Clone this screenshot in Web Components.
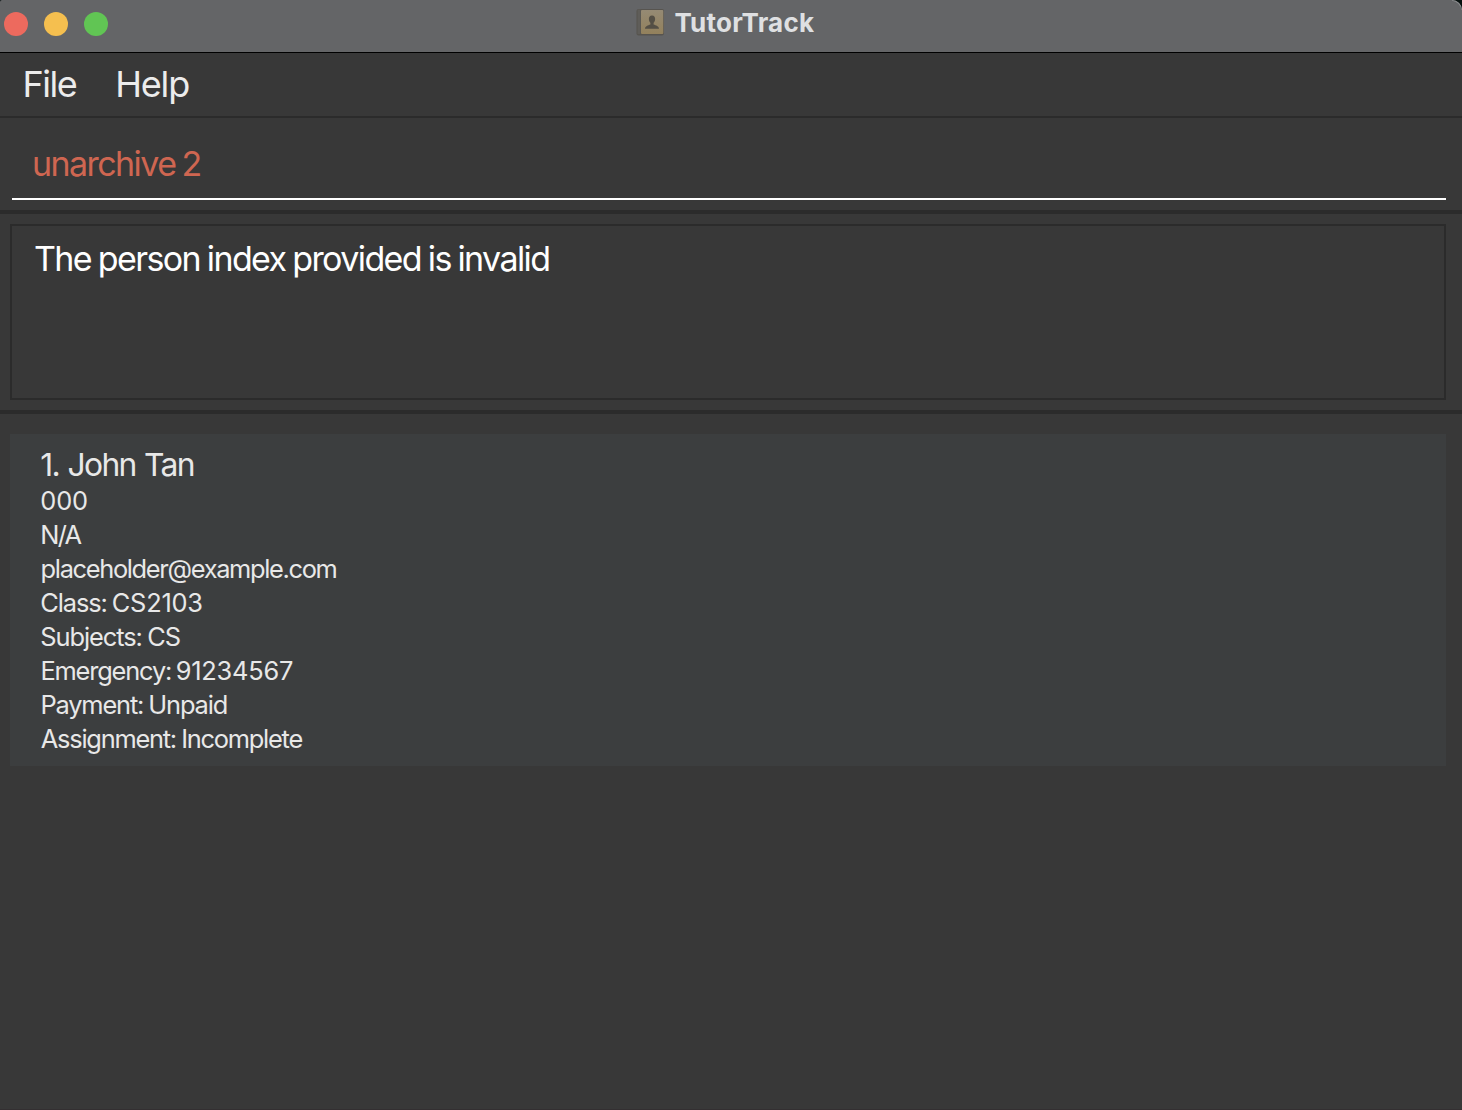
<!DOCTYPE html>
<html lang="en"><head><meta charset="utf-8"><title>TutorTrack</title>
<style>html,body{margin:0;height:100%;background:#383838;overflow:hidden}body{font-family:Inter,"Liberation Sans",sans-serif;color:#ececec}</style></head>
<body>
<app-window>
  <title-bar slot="title"><fit-text start="674.4" ink="139.6">TutorTrack</fit-text></title-bar>
  <menu-bar slot="menu"><fit-text start="25.4" ink="51.4">File</fit-text><fit-text start="118.2" ink="71">Help</fit-text></menu-bar>
  <command-box slot="command"><fit-text start="34" ink="166.4" gap="-2">unarchive 2</fit-text></command-box>
  <result-display slot="result"><fit-text start="35" ink="514.2" gap="-1.3">The person index provided is invalid</fit-text></result-display>
  <person-card>
    <fit-text slot="name" start="41.3" ink="152.5" gap="1.2">1. John Tan</fit-text>
    <fit-text start="41.3" ink="45.8">000</fit-text>
    <fit-text start="42.3" ink="39.2">N/A</fit-text>
    <fit-text start="41.6" ink="295">placeholder@example.com</fit-text>
    <fit-text start="41.3" ink="161" gap="-0.9" tail="0.9">Class: CS2103</fit-text>
    <fit-text start="41.2" ink="138.5" gap="-0.8">Subjects: CS</fit-text>
    <fit-text start="42.4" ink="250.6" gap="-1.6" tail="0.95">Emergency: 91234567</fit-text>
    <fit-text start="42.4" ink="184.3" gap="-0.8">Payment: Unpaid</fit-text>
    <fit-text start="40.8" ink="261.6" gap="-0.6">Assignment: Incomplete</fit-text>
  </person-card>
</app-window>
<script>
const define=(name,html,extra)=>customElements.define(name,class extends HTMLElement{
  constructor(){super();this.attachShadow({mode:'open'}).innerHTML=html}
  connectedCallback(){if(extra)extra(this)}
});
define('app-window',`<style>:host{display:flex;flex-direction:column;height:1110px;width:1462px;box-sizing:border-box;background:#383838;border-bottom:1px solid #332f31}
main{flex:1;border-top:4px solid #2b2b2b;padding:20px 16px 0 10px}</style>
<slot name="title"></slot><slot name="menu"></slot><slot name="command"></slot><slot name="result"></slot><main><slot></slot></main>`);
define('title-bar',`<style>:host{display:block;background:#07100e;border-bottom:1px solid #000;height:52px;font-size:26px;font-weight:700;line-height:45px;color:#dfe0e2}
.bar{display:flex;height:52px;background:#646567;border-radius:2px 10px 0 0}
.bar::after{content:"";box-sizing:border-box;width:10px;height:10px;margin-left:auto;border-radius:0 10px 0 0;box-shadow:inset -1px 1px 0 -0.4px #8a8b8d}
.dots{display:flex;gap:16px;padding:12px 0 0 4px;width:632px}
i{width:24px;height:24px;border-radius:50%;background:#ed6a5e}i:nth-child(2){background:#f5bf4f}i:nth-child(3){background:#61c554}
svg{display:block;margin-top:8px;flex:none}</style>
<div class="bar"><div class="dots"><i></i><i></i><i></i></div>
<svg width="30" height="30" viewBox="0 0 30 30"><defs><linearGradient id="g" x2="0" y2="1"><stop stop-color="#958a74"/><stop offset="1" stop-color="#93815c"/></linearGradient></defs><rect x=".5" y="1" width="27.5" height="26.5" rx="2" fill="#57544f"/><rect x="1.5" y="1.5" width="3" height="24.5" fill="#5f5d59"/><rect x="5" y="2" width="22.3" height="24" rx="1" fill="url(#g)"/><path d="M16 7.5c-2.3 0-3.4 1.7-3.1 4 .2 1.7.8 2.6 1.5 3.3v1.7c-2.4 1-5.2 1.5-5.4 4.3h14c-.2-2.8-3-3.3-5.4-4.3v-1.7c.7-.7 1.3-1.6 1.5-3.3.3-2.3-.8-4-3.1-4z" fill="#544f45"/></svg><slot></slot></div>`);
define('menu-bar',`<style>:host{display:flex;height:63px;border-bottom:2px solid #2b2b2b;font-size:36px;line-height:63px;color:#ececec}</style><slot></slot>`);
define('command-box',`<style>:host{display:block;height:92px;border-bottom:4px solid #2b2b2b;font-size:34px;line-height:69px;color:#cf6651}
div{box-sizing:border-box;height:82px;margin:0 16px 0 12px;padding-top:11px;border-bottom:2px solid #fff}</style><div><slot></slot></div>`);
define('result-display',`<style>:host{display:block;padding:10px 16px 10px 10px;font-size:34px;line-height:40px;color:#fff}
div{box-sizing:border-box;height:176px;padding-top:13px;border:2px solid #2b2b2b}</style><div><slot></slot></div>`);
define('person-card',`<style>:host{display:block;background:#3c3e3f;box-sizing:border-box;height:332px;padding-top:12px;font-size:25.4px;line-height:34px;color:#e8e8e8}
header{font-size:31.8px;line-height:38px}</style><header><slot name="name"></slot></header><slot></slot>`);
// Single line whose visible glyphs begin at `start` and span `ink` pixels;
// `gap` adjusts the spaces and `tail` the tracking of the last word.
define('fit-text',`<style>:host{display:block;white-space:pre;width:max-content;flex:none}</style><slot></slot>`,el=>{
  const num=k=>+el.getAttribute(k)||0;
  const s=getComputedStyle(el),c=document.createElement('canvas').getContext('2d');
  c.font=s.fontWeight+' '+s.fontSize+' Inter';
  const t=el.textContent,m=c.measureText(t),last=t.split(' ').pop(),tail=num('tail');
  const w=m.actualBoundingBoxRight+m.actualBoundingBoxLeft+num('gap')*(t.split(' ').length-1)+tail*(last.length-1);
  const ls=(num('ink')-w)/(t.length-1);
  el.style.letterSpacing=ls+'px';
  el.style.wordSpacing=num('gap')+'px';
  el.style.marginLeft=(num('start')+m.actualBoundingBoxLeft-el.getBoundingClientRect().left)+'px';
  if(tail){
    const b=document.createElement('span');
    b.textContent=last;b.style.letterSpacing=(ls+tail)+'px';
    el.replaceChildren(t.slice(0,-last.length),b);
  }
});
</script></body></html>
